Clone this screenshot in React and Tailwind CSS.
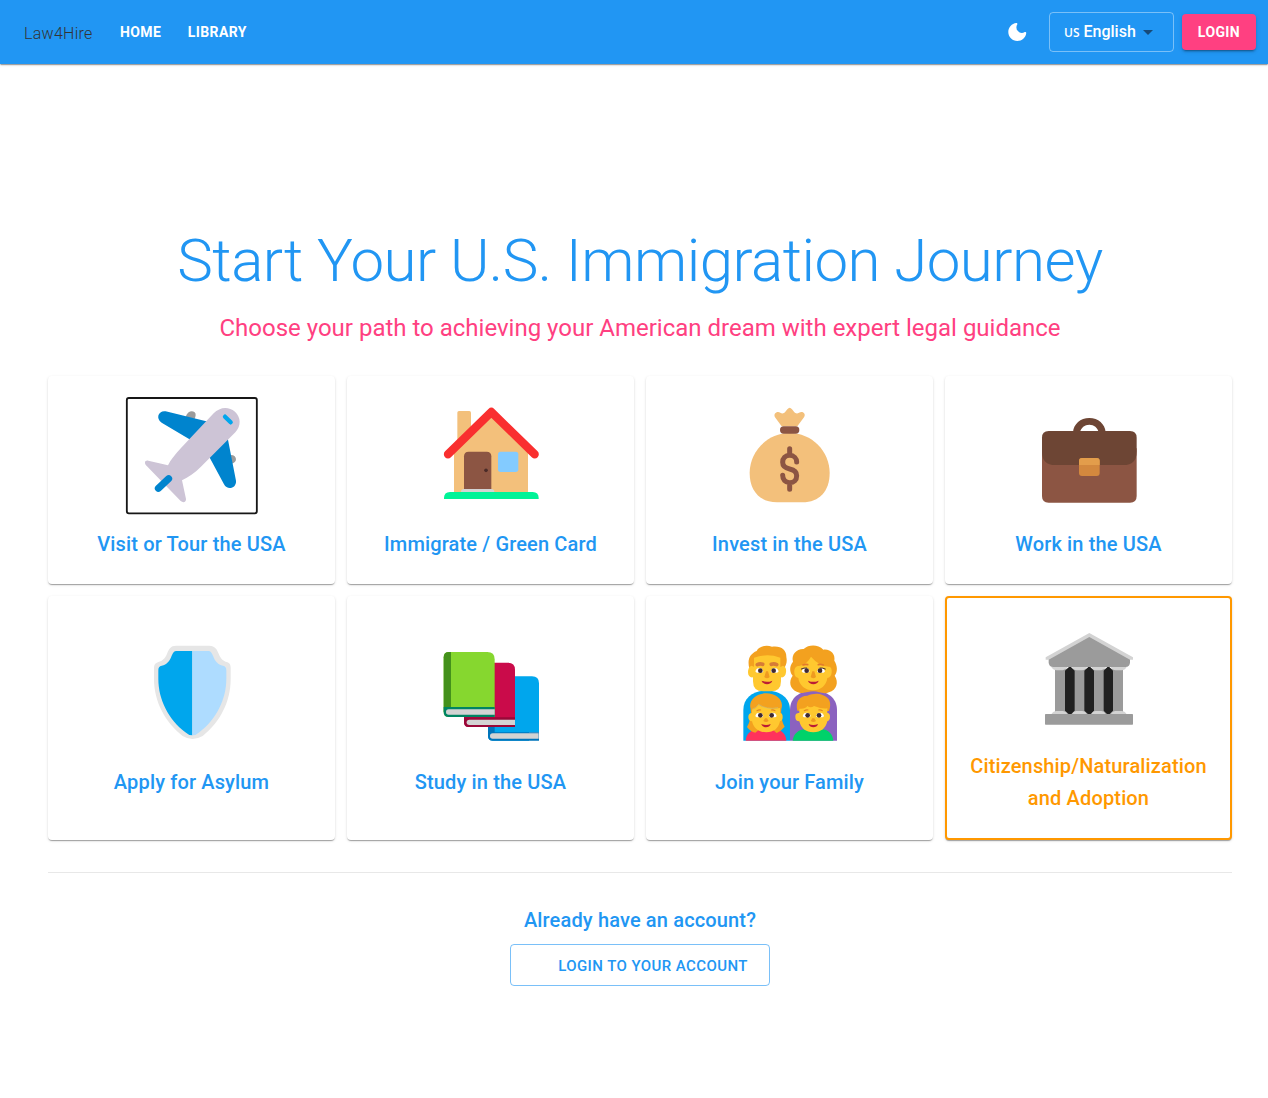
import React from "react";

const Icon = ({ box, children }) => (
  <svg viewBox={box} className="mr-px block h-[120px] w-[120px] shrink-0 overflow-visible" aria-hidden="true">
    {children}
  </svg>
);

const Airplane = () => (
  <Icon box="273 75 360 360">
    <rect x="260.5" y="84" width="390" height="346" rx="6" fill="none" stroke="#171717" strokeWidth="5.5" />
    <path d="M437 140c6-15 18-20 27-13 5 5 3 12 0 20zM570 255c12-1 18 5 18 13 0 7-5 11-13 13z" fill="#9b9b9b" />
    <path d="M377 124l128 31-54 54-86-51c-20-14-8-38 12-34zM506 257l57-53 25 128c2 23-26 30-36 11z" fill="#0084ce" />
    <path d="M521 130c18-19 44-22 64-5 18 17 19 42 1 62L482 291c-18 18-37 31-56 40l12 56c1 10-9 12-16 6l-101-104c-10-9-7-19 4-17l59 14c8-17 22-33 39-52z" fill="#cdc4d6" />
    <path d="M355 355l31-29" stroke="#0084ce" strokeWidth="21" strokeLinecap="round" />
    <path d="M555 140l17 17" stroke="#00a6ed" strokeWidth="13" strokeLinecap="round" />
  </Icon>
);

const House = () => (
  <Icon box="0 0 360 360">
    <rect x="82" y="48" width="41" height="100" rx="5" fill="#f3c07b" />
    <path d="M184 62L72 168v124h222V168z" fill="#f3c07b" />
    <path d="M54 178L184 51l130 127" fill="none" stroke="#f92f2f" strokeWidth="25" strokeLinecap="round" strokeLinejoin="round" />
    <path d="M102 283V184q0-14 14-14h54q14 0 14 14v99z" fill="#8c5543" />
    <circle cx="168" cy="226" r="5.5" fill="#4a2b28" />
    <rect x="204" y="170" width="61" height="61" rx="8" fill="#83cbff" />
    <path d="M93 292v-2q0-8 9-8h82q9 0 9 8v2z" fill="#d3d3d3" />
    <path d="M42 312v-3q0-18 18-18h248q18 0 18 18v3z" fill="#00f397" />
  </Icon>
);

const MoneyBag = () => (
  <Icon box="-3 0 360 360">
    <path d="M155 94l-20-27c-6-11 6-20 16-14 6 4 11 2 15-3l6-7c5-6 9-6 14 0l6 7c4 5 9 7 15 3 12-6 22 4 15 14l-20 27z" fill="#f3c07b" />
    <path d="M179 114c-66 0-120 54-120 120 0 54 31 88 82 88h76c51 0 82-34 82-88 0-66-54-120-120-120z" fill="#f3c07b" />
    <rect x="150" y="94" width="58" height="22" rx="11" fill="#8c5543" />
    <path d="M179 161v17M179 266v17M200 201c0-10-8-20-21-20s-21 9-21 21c0 14 11 18 21 20s21 6 21 20c0 13-8 21-21 21s-21-9-21-22" fill="none" stroke="#8c5543" strokeWidth="15" strokeLinecap="round" strokeLinejoin="round" />
  </Icon>
);

const Briefcase = () => (
  <Icon box="-6 0 360 360">
    <path d="M129 112c2-25 22-43 49-43s47 18 49 43h-21c-3-14-14-23-28-23s-25 9-28 23z" fill="#6d4534" />
    <path d="M36 160h284v143q0 20-20 20H56q-20 0-20-20z" fill="#8c5543" />
    <path d="M36 128q0-20 20-20h244q20 0 20 20v42q0 40-40 40H76q-40 0-40-40z" fill="#6d4534" />
    <rect x="147" y="189" width="62" height="54" rx="9" fill="#d3883e" />
    <path d="M147 210v-12q0-9 9-9h44q9 0 9 9v12z" fill="#e39d4b" />
  </Icon>
);

const Shield = () => (
  <Icon box="3 9 360 360">
    <path d="M138 47h100c17 0 23 11 28 24 6 15 13 22 25 25 8 3 11 8 11 17v34c0 68-32 130-84 171q-31 18-60 0c-52-41-86-103-86-171v-34c0-9 4-14 13-17 13-3 21-11 27-27 5-12 10-22 26-22z" fill="#e6e6e6" />
    <path d="M187 63h-48c-7 0-10 5-14 14-6 16-14 26-30 30-7 2-10 5-10 14v26c0 61 31 122 81 160q9 9 21 9z" fill="#00a6ed" />
    <path d="M187 63h48c7 0 10 5 14 14 6 16 14 26 30 30 7 2 10 5 10 14v26c0 61-31 122-81 160q-9 9-21 9z" fill="#aedcff" />
  </Icon>
);

const Books = () => (
  <Icon box="0 9 360 360">
    <path d="M174 310V160q0-21 20-21h112q21 0 21 21v147h-30v25H188q-14 0-14-14z" fill="#00a6ed" />
    <path d="M174 290h20v17h133v25H188q-14 0-14-15z" fill="#0074ba" />
    <path d="M326 310H188a8 8 0 0 0 0 16h138z" fill="#d3d3d3" />
    <path d="M102 276V118q0-20 20-20h112q21 0 21 21v172H116q-14 0-14-15z" fill="#ca0b4a" />
    <path d="M102 262h153v29H116q-14 0-14-15z" fill="#990838" />
    <path d="M255 269H118a8 8 0 0 0 0 16h137z" fill="#d3d3d3" />
    <path d="M41 246V82q0-16 16-16h115q22 0 22 22v173H56q-15 0-15-15z" fill="#86d72f" />
    <path d="M41 246V82q0-16 16-16h6v170z" fill="#44911b" />
    <path d="M41 231h153v30H56q-15 0-15-15z" fill="#008463" />
    <path d="M194 238H56a8 8 0 0 0 0 16h138z" fill="#d3d3d3" />
  </Icon>
);

const Face = ({ x, y }) => (
  <g transform={`translate(${x} ${y})`}>
    <path d="M-35-3q3-10 12-10t12 10q-2 4-5 4h-14q-3 0-5-4zM35-3q-3-10-12-10t-12 10q2 4 5 4h14q3 0 5-4z" fill="#fff" />
    <circle cx="-20" cy="-5" r="7" fill="#402a32" />
    <circle cx="20" cy="-5" r="7" fill="#402a32" />
    <path d="M-3-3h6l5 17q-8 8-16 0z" fill="#ef9b20" />
    <path d="M-16 25q16 7 32 0c-3 14-29 14-32 0z" fill="#bb1d35" />
  </g>
);

const ChildFace = ({ x, y }) => (
  <g transform={`translate(${x} ${y})`}>
    <path d="M-32 1q2-10 12-10t12 10q-2 4-5 4h-14q-3 0-5-4zM32 1q-2-10-12-10t-12 10q2 4 5 4h14q3 0 5-4z" fill="#fff" />
    <circle cx="-17" cy="-1" r="7" fill="#402a32" />
    <circle cx="17" cy="-1" r="7" fill="#402a32" />
    <path d="M-3 8h6l5 8q-8 6-16 0z" fill="#ef9b20" />
    <path d="M-14 25q14 6 28 0c-3 13-25 13-28 0z" fill="#bb1d35" />
    <path d="M-27-15q5-3 11-2M27-15q-5-3-11-2" fill="none" stroke="#e48722" strokeWidth="3.5" strokeLinecap="round" />
  </g>
);

const Family = () => (
  <Icon box="-3 9 360 360">
    <path d="M40 332v-92c0-36 28-58 70-58s70 22 70 58v92z" fill="#00a6ed" />
    <path d="M180 332v-92c0-37 28-58 70-58s71 21 71 58v92z" fill="#8b62bf" />
    <path d="M58 115c-7-26 2-44 22-52 7-15 29-19 46-13 27-4 44 10 43 31 3 13 0 24-7 35z" fill="#f3a11f" />
    <path d="M72 83q40-14 79 0v28l8-4c9 3 10 11 9 20-1 11-8 17-15 15v12q0 30-30 30H99q-30 0-30-30v-12c-8 2-15-4-15-15 0-9 3-17 10-20l8 3z" fill="#ffc82f" />
    <Face x={111} y={127} />
    <path d="M82 104q8-4 16-1M140 104q-8-4-16-1" fill="none" stroke="#d67c36" strokeWidth="11" strokeLinecap="round" />
    <path d="M221 57c16-14 43-14 59 2 21-3 37 13 33 33 9 14 11 32 1 45 13 20 6 42-17 50-16 7-31-3-47-3s-32 10-50 1c-20-9-25-30-12-48-10-12-10-29 1-42-6-22 11-39 32-38z" fill="#f3a11f" />
    <path d="M207 108q24-4 36-28 24 28 53 30c8 0 10 8 9 18-1 9-5 14-13 16-3 22-19 37-43 37s-41-15-44-37c-8-2-12-8-12-16-1-12 4-20 14-20z" fill="#ffc82f" />
    <Face x={250} y={127} />
    <path d="M214 117q8-4 16-3M286 117q-8-4-16-3" fill="none" stroke="#402a32" strokeWidth="3" strokeLinecap="round" />
    <path d="M219 105q7-3 14-1M265 104q7-2 15 1" stroke="#e37b2c" strokeWidth="5" fill="none" strokeLinecap="round" />
    <path d="M47 332c1-20 17-34 37-34h49c20 0 35 14 36 34z" fill="#ff325c" />
    <path d="M62 237c-8-26 17-47 47-47s54 21 45 47c-2 18 0 35 10 53q-12 14-24 19L107 282 76 308q-15-3-25-17c10-17 13-34 11-54z" fill="#f3a11f" />
    <path d="M66 239q13-4 20-15 24 17 64 10v15q8 0 8 12 0 11-8 13c-5 21-18 33-41 33s-38-12-43-33c-7 0-11-5-11-13s4-12 11-12z" fill="#ffc82f" />
    <path d="M66 238q13-4 20-15 24 17 58 10" fill="none" stroke="#b9c59a" strokeWidth="1.5" />
    <ChildFace x={108} y={257} />
    <path d="M188 332c2-20 18-34 38-34h48c20 0 34 14 36 34z" fill="#00d26a" />
    <path d="M202 242c-6-28 5-44 30-45 17-6 31-8 47-1 19 6 27 23 18 47z" fill="#f3a11f" />
    <path d="M208 236q18 2 24-8 10 8 20 0 26 10 40 7v14q8 0 8 12 0 10-8 13c-5 21-19 33-42 33s-37-12-42-33c-8 0-12-5-12-13 0-10 4-12 12-12z" fill="#ffc82f" />
    <ChildFace x={250} y={257} />
  </Icon>
);

const Building = () => (
  <Icon box="294 81 360 360">
    <rect x="375" y="236" width="204" height="136" fill="#9b9b9b" />
    <path d="M405 242l15-14 14 14v120l-14 14-15-14zM463 242l15-14 14 14v120l-14 14-15-14zM521 242l14-14 14 14v120l-14 14-14-14z" fill="#212121" />
    <path d="M364 231h49q-5 9-15 10h-18q-10 0-16-10zM426 231h45q-6 10-15 10h-16q-9 0-14-10zM484 231h44q-6 10-14 10h-17q-8 0-13-10zM542 231h48q-6 10-15 10h-18q-9 0-15-10z" fill="#d3d3d3" />
    <path d="M364 373q6-10 16-10h17q10 0 16 10zM426 373q5-10 14-10h16q9 0 15 10zM484 373q5-10 13-10h17q8 0 14 10zM542 373q6-10 15-10h17q10 0 16 10z" fill="#d3d3d3" />
    <path d="M356 200l122-67 122 67v17q0 14-14 14H370q-14 0-14-14z" fill="#9b9b9b" />
    <path d="M347 202l131-73 131 73v7h-9l-122-68-122 68h-9z" fill="#d3d3d3" />
    <rect x="345" y="372" width="264" height="32" rx="2" fill="#9b9b9b" />
  </Icon>
);

const paths = [
  { label: "Visit or Tour the USA", icon: Airplane },
  { label: "Immigrate / Green Card", icon: House },
  { label: "Invest in the USA", icon: MoneyBag },
  { label: "Work in the USA", icon: Briefcase },
  { label: "Apply for Asylum", icon: Shield },
  { label: "Study in the USA", icon: Books },
  { label: "Join your Family", icon: Family },
  { label: "Citizenship/Naturalization and Adoption", icon: Building, selected: true },
];

const cardShadow =
  "shadow-[0px_2px_1px_-1px_rgba(0,0,0,0.2),0px_1px_1px_0px_rgba(0,0,0,0.14),0px_1px_3px_0px_rgba(0,0,0,0.12)]";

function PathCard({ label, icon: Picture, selected }) {
  return (
    <button
      className={`flex flex-col items-center justify-center rounded bg-white px-4 pt-[19px] pb-6 ${cardShadow} ${
        selected ? "border-2 border-[#ff9800] text-[#ff9800]" : "text-[#2196f3]"
      }`}
    >
      <Picture />
      <span className="mt-[13px] text-[20px] leading-8 font-medium tracking-[0.15px]">{label}</span>
    </button>
  );
}

function Header() {
  return (
    <header className="flex h-16 items-center bg-[#2196f3] pr-3 pl-6 text-white shadow-[0px_2px_1px_-1px_rgba(0,0,0,0.2),0px_1px_1px_0px_rgba(0,0,0,0.14),0px_1px_3px_0px_rgba(0,0,0,0.12)]">
      <span className="mt-[3px] w-[69px] text-[16px] leading-6 font-light tracking-[0.27px] text-[#333]">Law4Hire</span>
      <nav className="ml-[27px] flex gap-[26.5px] text-[14px] leading-6 font-bold tracking-[0.4px]">
        <a>HOME</a>
        <a>LIBRARY</a>
      </nav>
      <div className="ml-auto flex items-center">
        <svg viewBox="0 0 24 24" className="mr-5 h-6 w-6" fill="#fff">
          <path d="M11.3 3.05C6.8 3.54 3.3 7.36 3.3 12c0 4.97 4.03 9 9 9 4.63 0 8.45-3.5 8.95-8 .09-.79-.78-1.42-1.54-.95A5.4 5.4 0 0 1 11.4 7.5c0-1.06.31-2.06.84-2.89.45-.67-.04-1.63-.93-1.56z" />
        </svg>
        <button className="mr-2 flex h-10 w-[125px] items-center rounded border border-white/40 pl-[14px] text-[16px]">
          <span className="mt-[2px] mr-1 font-[Open_Sans,sans-serif] text-[12px] font-semibold">US</span>
          <span className="font-medium">English</span>
          <svg viewBox="0 0 24 24" className="h-6 w-6" fill="#174a78">
            <path d="M7 10l5 5 5-5z" />
          </svg>
        </button>
        <button className="h-9 w-[74px] rounded bg-[#ff4081] text-[14px] font-bold tracking-[0.4px] shadow-[0px_3px_1px_-2px_rgba(0,0,0,0.2),0px_2px_2px_0px_rgba(0,0,0,0.14),0px_1px_5px_0px_rgba(0,0,0,0.12)]">
          LOGIN
        </button>
      </div>
    </header>
  );
}

export default function App() {
  return (
    <div className="min-h-[1098px] bg-white font-[Roboto,sans-serif]">
      <Header />
      <main className="flex flex-col px-12 pr-9 pt-[161px] text-center">
        <div className="w-[1184px]">
          <h1 className="text-[60px] leading-[72px] font-light tracking-[-0.5px] text-[#2196f3]">
            Start Your U.S. Immigration Journey
          </h1>
          <p className="mt-[15px] text-[24px] leading-8 text-[#ff4081]">
            Choose your path to achieving your American dream with expert legal guidance
          </p>
          <div className="mt-8 grid grid-cols-4 grid-rows-[208px_244px] gap-3">
            {paths.map((p) => (
              <PathCard key={p.label} {...p} />
            ))}
          </div>
          <hr className="mt-8 border-[#e8e8e8]" />
          <h2 className="mt-[31px] text-[20px] leading-8 font-medium tracking-[0.15px] text-[#2196f3]">
            Already have an account?
          </h2>
          <button className="mt-2 h-[42px] w-[260px] rounded border border-[#2196f3]/60 pt-0.5 pl-[26px] text-[15px] font-medium tracking-[0.42px] text-[#2196f3]">
            LOGIN TO YOUR ACCOUNT
          </button>
        </div>
      </main>
    </div>
  );
}
